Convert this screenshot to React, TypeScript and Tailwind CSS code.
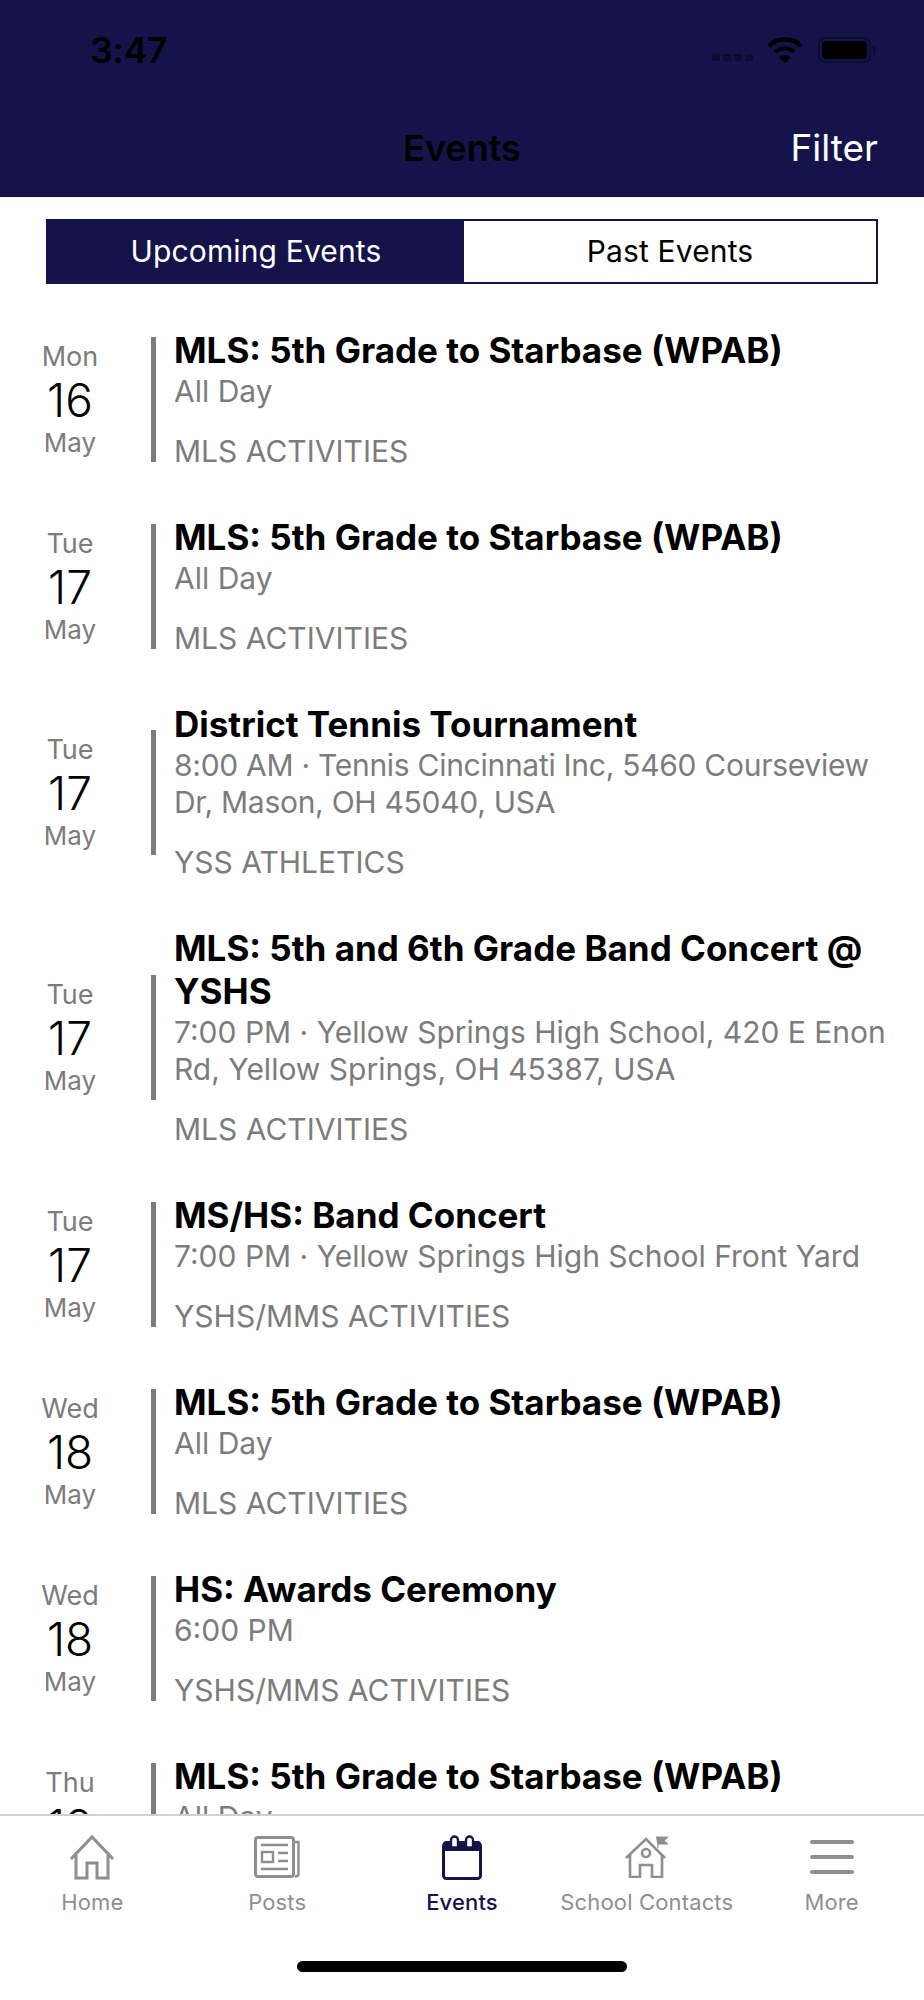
import type { ReactNode } from "react";

const events = [
  { wd: "Mon", day: "16", title: ["MLS: 5th Grade to Starbase (WPAB)"], sub: ["All Day"], cat: "MLS ACTIVITIES" },
  { wd: "Tue", day: "17", title: ["MLS: 5th Grade to Starbase (WPAB)"], sub: ["All Day"], cat: "MLS ACTIVITIES" },
  {
    wd: "Tue",
    day: "17",
    title: ["District Tennis Tournament"],
    sub: ["8:00 AM · Tennis Cincinnati Inc, 5460 Courseview", "Dr, Mason, OH 45040, USA"],
    tight: true,
    cat: "YSS ATHLETICS",
  },
  {
    wd: "Tue",
    day: "17",
    title: ["MLS: 5th and 6th Grade Band Concert @", "YSHS"],
    sub: ["7:00 PM · Yellow Springs High School, 420 E Enon", "Rd, Yellow Springs, OH 45387, USA"],
    cat: "MLS ACTIVITIES",
  },
  {
    wd: "Tue",
    day: "17",
    title: ["MS/HS: Band Concert"],
    sub: ["7:00 PM · Yellow Springs High School Front Yard"],
    cat: "YSHS/MMS ACTIVITIES",
  },
  { wd: "Wed", day: "18", title: ["MLS: 5th Grade to Starbase (WPAB)"], sub: ["All Day"], cat: "MLS ACTIVITIES" },
  { wd: "Wed", day: "18", title: ["HS: Awards Ceremony"], sub: ["6:00 PM"], cat: "YSHS/MMS ACTIVITIES" },
  { wd: "Thu", day: "19", title: ["MLS: 5th Grade to Starbase (WPAB)"], sub: ["All Day"], cat: "MLS ACTIVITIES" },
];

function EventRow({ ev }: { ev: (typeof events)[number] }) {
  return (
    <div className="flex items-center">
      <div className="w-[140px] shrink-0 flex flex-col items-center pt-[1px]">
        <span className="text-[27px] leading-[36px] text-[#7c7c7c]">{ev.wd}</span>
        <span className="text-[46px] leading-[50px] font-light text-black">{ev.day}</span>
        <span className="text-[26px] leading-[36px] text-[#7c7c7c]">May</span>
      </div>
      <div className="w-[5px] h-[125px] shrink-0 bg-[#7c7c7c] ml-[11px]" />
      <div className="ml-[18px] flex flex-col whitespace-nowrap">
        {ev.title.map((t) => (
          <div key={t} className="text-[35px] leading-[43px] font-bold text-black">
            {t}
          </div>
        ))}
        <div className="mt-[1px]">
          {ev.sub.map((s) => (
            <div key={s} className={`text-[30px] leading-[37px] text-[#7c7c7c] ${ev.tight ? "tracking-[-0.28px]" : ""}`}>
              {s}
            </div>
          ))}
        </div>
        <div className="text-[30px] leading-[37px] mt-[23px] text-[#7c7c7c]">{ev.cat}</div>
      </div>
    </div>
  );
}

function TabItem({ label, active, children }: { label: string; active?: boolean; children: ReactNode }) {
  return (
    <div className="flex flex-col items-center flex-1">
      <div className="h-[50px] flex items-center justify-center">{children}</div>
      <span className={`text-[22px] leading-[28px] mt-[6px] tracking-[0.15px] whitespace-nowrap ${active ? "text-[#14144a] font-medium" : "text-[#8e8e93]"}`}>
        {label}
      </span>
    </div>
  );
}

export default function App() {
  return (
    <div className="relative w-[924px] h-[2000px] bg-white overflow-hidden font-['Inter','Liberation_Sans',sans-serif]">
      {/* header */}
      <div className="h-[197px] bg-[#14144a] relative border-b border-[#0c0c30]">
        <div className="flex items-center justify-between pl-[90px] pr-[48px] pt-[26px]">
          <span className="text-[36px] leading-[48px] font-semibold tracking-[-0.5px] text-black">3:47</span>
          <div className="flex items-center">
            <div className="flex gap-[3px] mt-[14px] mr-[14px]">
              <span className="w-[8px] h-[7px] rounded-[2px] bg-[#0c0c30]" />
              <span className="w-[8px] h-[7px] rounded-[2px] bg-[#0c0c30]" />
              <span className="w-[8px] h-[7px] rounded-[2px] bg-[#0c0c30]" />
              <span className="w-[8px] h-[7px] rounded-[2px] bg-[#0c0c30]" />
            </div>
            <svg width="36" height="26" viewBox="0 0 36 26" className="mr-[15px]">
              <path d="M2 9 C11 0 25 0 34 9" fill="none" stroke="#000" strokeWidth="4.4" />
              <path d="M8.5 15 C14 10 22 10 27.5 15" fill="none" stroke="#000" strokeWidth="4.2" />
              <path d="M12 20.5 C15.5 17.5 20.5 17.5 24 20.5 L18 26 Z" fill="#000" />
            </svg>
            <div className="w-[53px] h-[26px] rounded-[7px] border-2 border-[#0c0c30] p-[2px]">
              <div className="w-full h-full bg-black rounded-[4px]" />
            </div>
            <div className="w-[3px] h-[9px] ml-[2px] rounded-r-[2px] bg-[#0c0c30]" />
          </div>
        </div>
        <div className="absolute left-0 right-0 top-[126px] text-center text-[36px] leading-[44px] font-semibold text-black">Events</div>
        <div className="absolute right-[46px] top-[126px] text-[37px] leading-[44px] text-white">Filter</div>
      </div>

      {/* segmented control */}
      <div className="flex mx-[46px] mt-[22px] h-[65px] border-2 border-[#14144a]">
        <div className="w-[416px] bg-[#14144a] flex items-center justify-center text-[30px] tracking-[0.15px] text-white">Upcoming Events</div>
        <div className="flex-1 bg-white flex items-center justify-center text-[30px] tracking-[0.15px] text-black">Past Events</div>
      </div>

      {/* list, clipped where the tab bar starts */}
      <div className="flex flex-col gap-[46px] mt-[45px] h-[1486px] overflow-hidden">
        {events.map((ev, i) => (
          <EventRow key={i} ev={ev} />
        ))}
      </div>

      {/* tab bar */}
      <div className="absolute left-0 right-0 bottom-0 h-[186px] bg-white border-t-2 border-[#d0d0d2]">
        <div className="flex pt-[16px]">
          <TabItem label="Home">
            <svg width="46" height="46" viewBox="0 0 46 46" fill="none" stroke="#8e8e93" strokeWidth="3">
              <path d="M2 25 L23 3 L44 25" />
              <path d="M7 21 V44 H18 V29 H28 V44 H39 V21" />
            </svg>
          </TabItem>
          <TabItem label="Posts">
            <svg width="46" height="42" viewBox="0 0 46 42" fill="none" stroke="#8e8e93" strokeWidth="2.4">
              <rect x="1.5" y="1.5" width="38" height="39" rx="2.5" strokeWidth="3" />
              <path d="M40 6 H44.5 V38 Q44.5 40.5 41 40.5" />
              <path d="M7 9 H34 M7 33 H34 M24 17 H34 M24 25 H34" />
              <rect x="8" y="16" width="11" height="10" />
            </svg>
          </TabItem>
          <TabItem label="Events" active>
            <svg width="40" height="45" viewBox="0 0 40 45" fill="none">
              <rect x="1.5" y="8" width="37" height="35.5" rx="3" stroke="#14144a" strokeWidth="3" />
              <path d="M1.5 8 Q1.5 6 4 6 H36 Q38.5 6 38.5 8 V16 H1.5 Z" fill="#14144a" />
              <path d="M9 12.5 V5 a3.5 3.5 0 0 1 7 0 V12.5 Z M24 12.5 V5 a3.5 3.5 0 0 1 7 0 V12.5 Z" stroke="#14144a" strokeWidth="2.4" fill="#fff" />
            </svg>
          </TabItem>
          <TabItem label="School Contacts">
            <svg width="44" height="42" viewBox="0 0 44 42" fill="none" stroke="#8e8e93" strokeWidth="2.6">
              <path d="M1 22 L21 3 L40 22" />
              <path d="M5 19 V41 H15 V29 H27 V41 H37 V19" />
              <circle cx="21" cy="17" r="4" />
              <path d="M31 1 H43 L39 4.5 L43 8 H33 V12" fill="#8e8e93" strokeWidth="1" />
            </svg>
          </TabItem>
          <TabItem label="More">
            <svg width="44" height="34" viewBox="0 0 44 34" fill="#8e8e93">
              <rect x="0" y="0" width="44" height="4" rx="2" />
              <rect x="0" y="15" width="44" height="4" rx="2" />
              <rect x="0" y="30" width="44" height="4" rx="2" />
            </svg>
          </TabItem>
        </div>
        <div className="absolute left-[297px] top-[145px] w-[330px] h-[11px] bg-black rounded-full" />
      </div>
    </div>
  );
}
